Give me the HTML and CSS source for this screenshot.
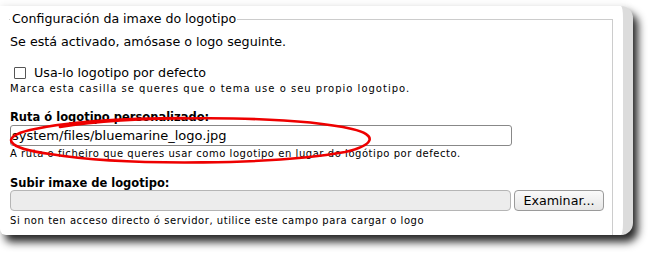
FILE: index.html
```html
<!DOCTYPE html>
<html>
<head>
<meta charset="utf-8">
<link rel="stylesheet" href="styles.css">
</head>
<body>
<div class="frame">
  <fieldset class="group">
    <legend class="legend">Configuración da imaxe do logotipo</legend>
    <div class="intro">Se está activado, amósase o logo seguinte.</div>
    <label class="check-row"><span class="checkbox"></span><span>Usa-lo logotipo por defecto</span></label>
    <div class="desc desc-check">Marca esta casilla se queres que o tema use o seu propio logotipo.</div>
    <div class="label label-path">Ruta ó logotipo personalizado:</div>
    <div class="text-input">system/files/bluemarine_logo.jpg</div>
    <div class="desc desc-path">A ruta o ficheiro que queres usar como logotipo en lugar do logótipo por defecto.</div>
    <div class="label label-upload">Subir imaxe de logotipo:</div>
    <div class="file-row">
      <div class="file-field"></div>
      <div class="browse">Examinar...</div>
    </div>
    <div class="desc desc-upload">Si non ten acceso directo ó servidor, utilice este campo para cargar o logo</div>
  </fieldset>
  <svg class="marker" width="400" height="70" viewBox="0 0 400 70">
    <path d="M60 20 C 130 8, 290 8, 352 22 C 378 28, 375 38, 345 45 C 280 57, 130 60, 50 47 C 5 41, 0 30, 30 23 C 70 14, 130 11, 185 11" fill="none" stroke="#ee0000" stroke-width="2.6" stroke-linecap="round"/>
  </svg>
</div>
</body>
</html>
```
FILE: styles.css
```css
html, body {
  margin: 0;
  padding: 0;
  background: #ffffff;
}
body {
  width: 657px;
  height: 260px;
  overflow: hidden;
  font-family: "DejaVu Sans", Verdana, sans-serif;
  color: #000;
}
.frame {
  position: relative;
  margin-top: 6px;
  width: 623px;
  height: 229px;
  background: #ffffff;
  border-right: 10px solid #dcdcdc;
  border-radius: 0 12px 12px 6px;
  box-shadow: 5px 7px 8px rgba(0, 0, 0, 0.85), 0 -3px 6px rgba(0, 0, 0, 0.04);
  overflow: hidden;
}
.group {
  margin: 5px 0 0 9px;
  width: 604px;
  height: 260px;
  padding: 0 0 0 1px;
  border: 1px solid #cccccc;
  border-left: none;
  border-bottom: none;
  box-sizing: border-box;
}
.legend {
  font-size: 12.6px;
  line-height: 16px;
  padding: 0 1px 0 2px;
  margin-left: 0;
}
.intro {
  margin-top: 7px;
  font-size: 12.7px;
  line-height: 16px;
}
.check-row {
  display: flex;
  align-items: center;
  height: 16px;
  margin: 15px 0 0 4px;
  font-size: 12.7px;
  line-height: 16px;
}
.checkbox {
  width: 10px;
  height: 10px;
  border: 1px solid #555;
  border-radius: 1px;
  margin-right: 8px;
}
.desc {
  font-size: 10px;
  line-height: 12px;
  letter-spacing: 0.55px;
}
.desc-check {
  margin-top: 2px;
  letter-spacing: 1px;
}
.desc-path {
  margin-top: 2px;
}
.desc-upload {
  margin-top: 4px;
}
.label {
  font-weight: bold;
  font-size: 11.5px;
  line-height: 14px;
}
.label-path {
  margin-top: 15px;
}
.label-upload {
  margin-top: 16px;
}
.text-input {
  margin-top: 1px;
  width: 502px;
  height: 21px;
  box-sizing: border-box;
  border: 1px solid #888;
  border-radius: 3px;
  font-size: 13px;
  line-height: 19px;
  padding-left: 1px;
}
.file-row {
  display: flex;
  gap: 3px;
  height: 21px;
}
.file-field {
  width: 501px;
  height: 21px;
  box-sizing: border-box;
  background: #ececec;
  border: 1px solid #b5b5b5;
  border-radius: 4px;
}
.browse {
  width: 90px;
  height: 21px;
  box-sizing: border-box;
  border: 1px solid #9a9a9a;
  border-radius: 4px;
  background: linear-gradient(#fafafa, #e6e6e6);
  font-size: 12.7px;
  line-height: 19px;
  text-align: center;
}
.marker {
  position: absolute;
  left: 0;
  top: 101px;
}
```
